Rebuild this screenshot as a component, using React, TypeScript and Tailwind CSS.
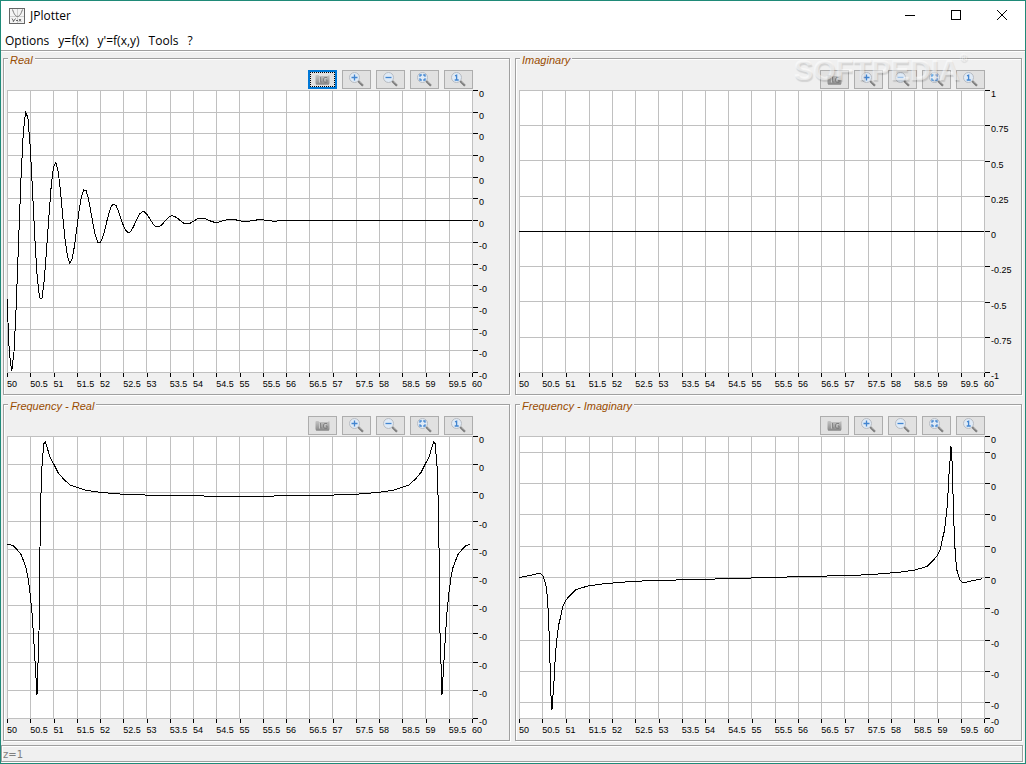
import type { ReactNode } from "react"

type Point = [number, number]

interface PlotProps {
  title: string
  yTicks: string[]
  // distance from each tick to the next one, relative to the others
  ySteps: number[]
  points: Point[]
  focused?: boolean
}

const PLOT_W = 465
const PLOT_H = 282

const X_TICKS = Array.from({ length: 21 }, (_, i) => String(50 + i / 2))

const MENUS = ["Options", "y=f(x)", "y'=f(x,y)", "Tools", "?"]

// exp(-t) * sin(10x), sampled every 0.05
const realPoints: Point[] = Array.from({ length: 201 }, (_, i) => {
  const t = i * 0.05
  return [t * 46.5, 130 - 167 * Math.exp(-t) * Math.sin(10 * (50 + t))]
})

const imaginaryPoints: Point[] = [
  [0, 141],
  [465, 141],
]

const freqRealHalf: Point[] = [
  [0, 108], [2, 108], [6, 109], [10, 113], [14, 118], [16, 123], [19, 131], [21, 141],
  [23, 156], [24, 166], [25, 176], [26, 191], [27, 207], [28, 224], [29, 241], [30, 258],
  [31, 227], [32, 196], [32.5, 141], [33, 111], [33.6, 78], [34.4, 37], [36, 17], [36.7, 7.5],
  [38.2, 5.5], [39.5, 9], [43, 20.5], [47, 28], [51, 36], [56, 42], [63, 48.5], [70, 51],
  [80, 54], [95, 56], [113, 57.5], [143, 58.7], [183, 59.3], [232.5, 60],
]

const freqRealPoints: Point[] = [
  ...freqRealHalf,
  ...freqRealHalf
    .slice(1, -1)
    .reverse()
    .map(([x, y]): Point => [PLOT_W - x, y]),
]

const freqImagHalf: Point[] = [
  [232.5, 141.5], [261, 140.7], [299, 139.7], [331, 139], [353, 138], [369, 136.7],
  [384, 135.3], [396, 133.5], [408, 130], [414, 124], [418.5, 119], [421.5, 112],
  [423.5, 102], [425.5, 94], [427, 81], [428.3, 69], [429.3, 52], [430.3, 32], [431.3, 21],
  [432, 10], [433, 24], [434, 57], [434.7, 81], [435.7, 107], [436.7, 123], [438, 134],
  [439.7, 140], [441.3, 144], [444, 146.5], [451, 144.7], [463, 142.3],
]

const freqImagPoints: Point[] = [
  [0, 141.5],
  ...freqImagHalf
    .slice(1)
    .reverse()
    .map(([x, y]): Point => [PLOT_W - x, 283 - y]),
  ...freqImagHalf,
]

function AppIcon() {
  return (
    <svg width="16" height="16" viewBox="0 0 16 16" aria-hidden="true">
      <rect x="0.5" y="0.5" width="15" height="15" fill="#f4f4f4" stroke="#666" />
      <path d="M8.5 1v14M1 8.5h14" stroke="#cfcfcf" fill="none" />
      <path d="M3.5 1.5C5 6 6.5 8.5 8.5 8.5S12 6 13.5 1.5" stroke="#777" fill="none" />
      <path d="M3 10.5l1.500 2.500M6.500 10.500L4 14M7 12.500h2M10 11l2 2.500M12 11l-2 2.500" stroke="#444" strokeWidth="0.8" fill="none" />
    </svg>
  )
}

function SnapshotIcon() {
  return (
    <svg width="15" height="15" viewBox="0 0 15 15" aria-hidden="true">
      <defs>
        <linearGradient id="snapshot" x1="0" y1="0" x2="0" y2="1">
          <stop offset="0" stopColor="#c4c4c4" />
          <stop offset="1" stopColor="#8a8a8a" />
        </linearGradient>
      </defs>
      <path d="M0.5 4q0-1 1-1h2q.5 1 1 1h8.500l1-1q.5 0 .5 1v7q0 1.500-1.500 1.500h-11q-1.500 0-1.500-1.500z" fill="url(#snapshot)" />
      <path d="M1 12h13" stroke="#8a8a8a" />
      <path d="M5.500 5v5h1.500" stroke="#858585" fill="none" />
      <path d="M12 5.500H9.500L8.500 7v2l1 1.500h2.500V8h-1.500" stroke="#808080" fill="none" />
      <path d="M4.500 4.500v6M11.500 6.500h-1.500v2.500" stroke="#c8c8c8" fill="none" />
    </svg>
  )
}

function ZoomIcon({ children }: { children: ReactNode }) {
  return (
    <svg width="15" height="15" viewBox="0 0 15 15" fill="none" aria-hidden="true">
      <path d="M9 8.700l5 5" stroke="#777" strokeWidth="2.200" />
      <path d="M9.500 8.700l5 5" stroke="#c8c8c8" strokeWidth="1" strokeDasharray="1 1" />
      <circle cx="5.500" cy="5.500" r="5" fill="#dfeaf6" stroke="#b8bcc2" />
      <g stroke="#4285d0" strokeWidth="1.300">{children}</g>
    </svg>
  )
}

const TOOLS = [
  { label: "Snapshot", icon: <SnapshotIcon /> },
  { label: "Zoom in", icon: <ZoomIcon><path d="M2.500 5.500h6M5.500 2.500v6" /></ZoomIcon> },
  { label: "Zoom out", icon: <ZoomIcon><path d="M2.500 5.500h6" /></ZoomIcon> },
  {
    label: "Fit",
    icon: <ZoomIcon><path d="M3 4.800v-1.800h1.800M6.200 3h1.800v1.800M8 6.200v1.800h-1.800M4.800 8h-1.800v-1.800" /></ZoomIcon>,
  },
  { label: "Original size", icon: <ZoomIcon><path d="M4 3.800l1.600-.6v4.600M3.700 8h4" /></ZoomIcon> },
]

function Toolbar({ focused }: { focused?: boolean }) {
  return (
    <div className="flex justify-end gap-[5px]">
      {TOOLS.map((tool, i) => (
        <button
          key={tool.label}
          type="button"
          aria-label={tool.label}
          className={
            focused && i === 0
              ? "flex h-[19px] w-[29px] items-center justify-center border-2 border-[#0078d7] bg-[#e1e1e1] outline-1 -outline-offset-3 outline-dotted outline-black"
              : "flex h-[19px] w-[29px] items-center justify-center border border-[#adadad] bg-[#e1e1e1]"
          }
        >
          {tool.icon}
        </button>
      ))}
    </div>
  )
}

function PlotArea({ points, ySteps }: { points: Point[]; ySteps: number[] }) {
  const total = ySteps.reduce((a, b) => a + b, 0)
  let sum = 0
  const rows = [0, ...ySteps.map((s) => Math.floor(((sum += s) / total) * PLOT_H + 0.49))]

  return (
    <svg
      className="block h-[283px] w-full bg-white"
      viewBox="0 0 466 283"
      preserveAspectRatio="none"
      shapeRendering="crispEdges"
      fill="none"
    >
      <g stroke="#c0c0c0">
        {X_TICKS.map((x, i) => {
          const px = Math.floor((i * PLOT_W) / 20 + 0.49) + 0.5
          return <line key={x} x1={px} x2={px} y1="0" y2="283" />
        })}
        {rows.map((y) => (
          <line key={y} x1="0" x2="466" y1={y + 0.5} y2={y + 0.5} />
        ))}
      </g>
      <polyline
        stroke="#000"
        points={points.map(([x, y]) => `${x.toFixed(1)},${(y + 0.5).toFixed(1)}`).join(" ")}
      />
    </svg>
  )
}

function YAxis({ ticks, steps }: { ticks: string[]; steps: number[] }) {
  return (
    <div className="flex h-[282px] w-9 flex-col">
      {ticks.map((tick, i) => (
        <div key={i} className="flex min-h-0 basis-0 items-start gap-px" style={{ flexGrow: steps[i] ?? 0 }}>
          <span className="h-px w-[5px] shrink-0 bg-black" />
          <span className="leading-[8px]">{tick}</span>
        </div>
      ))}
    </div>
  )
}

function XAxis() {
  return (
    <div className="flex h-[18px] pr-px">
      {X_TICKS.map((tick) => (
        <div key={tick} className="flex min-w-0 flex-1 basis-0 flex-col gap-[3px] whitespace-nowrap last:w-0 last:flex-none">
          <span className="h-1 w-px shrink-0 bg-black" />
          <span className="leading-[8px]">{tick}</span>
        </div>
      ))}
    </div>
  )
}

function Plot({ title, yTicks, ySteps, points, focused }: PlotProps) {
  return (
    <fieldset className="min-w-0 border border-[#a0a0a0] pb-[3px] pl-[3px] shadow-[1px_1px_0_#fff,inset_1px_1px_0_#fff]">
      <legend className="ml-px h-[13px] bg-[#f0f0f0] px-0.5 text-[11px] leading-[17px] text-[#994c00] italic">
        {title}
      </legend>
      <div className="grid grid-cols-[1fr_36px] pt-[5px] text-[9px] text-black">
        <Toolbar focused={focused} />
        <div />
        <div className="pt-px">
          <PlotArea points={points} ySteps={ySteps} />
        </div>
        <div className="pt-px">
          <YAxis ticks={yTicks} steps={ySteps} />
        </div>
        <XAxis />
      </div>
    </fieldset>
  )
}

function TitleBar() {
  return (
    <header className="flex h-[30px] items-center bg-white pl-2 font-['Open_Sans','Noto_Sans',sans-serif] text-xs text-black">
      <AppIcon />
      <h1 className="pl-[5px]">JPlotter</h1>
      <div className="mb-auto ml-auto flex h-7">
        <button type="button" aria-label="Minimize" className="flex w-[46px] items-center justify-center">
          <svg width="10" height="10" viewBox="0 0 10 10" shapeRendering="crispEdges">
            <path d="M0 5.500h10" stroke="#000" />
          </svg>
        </button>
        <button type="button" aria-label="Maximize" className="flex w-[46px] items-center justify-center">
          <svg width="10" height="10" viewBox="0 0 10 10" shapeRendering="crispEdges">
            <rect x="0.5" y="0.5" width="9" height="9" fill="none" stroke="#000" />
          </svg>
        </button>
        <button type="button" aria-label="Close" className="flex w-[46px] items-center justify-center">
          <svg width="10" height="10" viewBox="0 0 10 10">
            <path d="M0 0l10 10M10 0L0 10" stroke="#000" />
          </svg>
        </button>
      </div>
    </header>
  )
}

function MenuBar() {
  return (
    <nav className="flex h-5 items-center gap-[9px] border-b border-[#a0a0a0] bg-white pl-1 font-['Open_Sans','Noto_Sans',sans-serif] text-xs text-black">
      {MENUS.map((menu) => (
        <button key={menu} type="button">
          {menu}
        </button>
      ))}
    </nav>
  )
}

export default function App() {
  return (
    <div className="flex min-h-screen flex-col border border-[#1f8a78] bg-[#f0f0f0] font-['Liberation_Sans',Arial,sans-serif]">
      <TitleBar />
      <MenuBar />
      <main className="relative grid grid-cols-2 gap-x-[5px] gap-y-[3px] border-t border-white pr-[3px] pl-0.5">
        <Plot
          title="Real"
          yTicks={["0", "0", "0", "0", "0", "0", "0", "-0", "-0", "-0", "-0", "-0", "-0", "-0"]}
          ySteps={Array(13).fill(1)}
          points={realPoints}
          focused
        />
        <Plot
          title="Imaginary"
          yTicks={["1", "0.75", "0.5", "0.25", "0", "-0.25", "-0.5", "-0.75", "-1"]}
          ySteps={Array(8).fill(1)}
          points={imaginaryPoints}
        />
        <Plot
          title="Frequency - Real"
          yTicks={["0", "0", "0", "-0", "-0", "-0", "-0", "-0", "-0", "-0", "-0"]}
          ySteps={Array(10).fill(1)}
          points={freqRealPoints}
        />
        <Plot
          title="Frequency - Imaginary"
          yTicks={["0", "0", "0", "0", "0", "0", "-0", "-0", "-0", "-0", "-0"]}
          ySteps={[1, 2, 2, 2, 2, 2, 2, 2, 2, 1]}
          points={freqImagPoints}
        />
        <div className="pointer-events-none absolute top-0 right-[58px] flex items-start text-[29px] leading-9 font-bold text-white/50 [text-shadow:1px_2px_1px_rgb(0_0_0/0.12)]">
          SOFTPEDIA<span className="text-[10px] leading-3">®</span>
        </div>
      </main>
      <footer className="mt-auto mr-0.5 mb-px h-[17px] border border-[#a0a0a0] pl-px font-['DejaVu_Sans',sans-serif] text-[10px] leading-[17px] text-[#808080] shadow-[1px_1px_0_#fff,inset_1px_1px_0_#fff]">
        z=1
      </footer>
    </div>
  )
}
